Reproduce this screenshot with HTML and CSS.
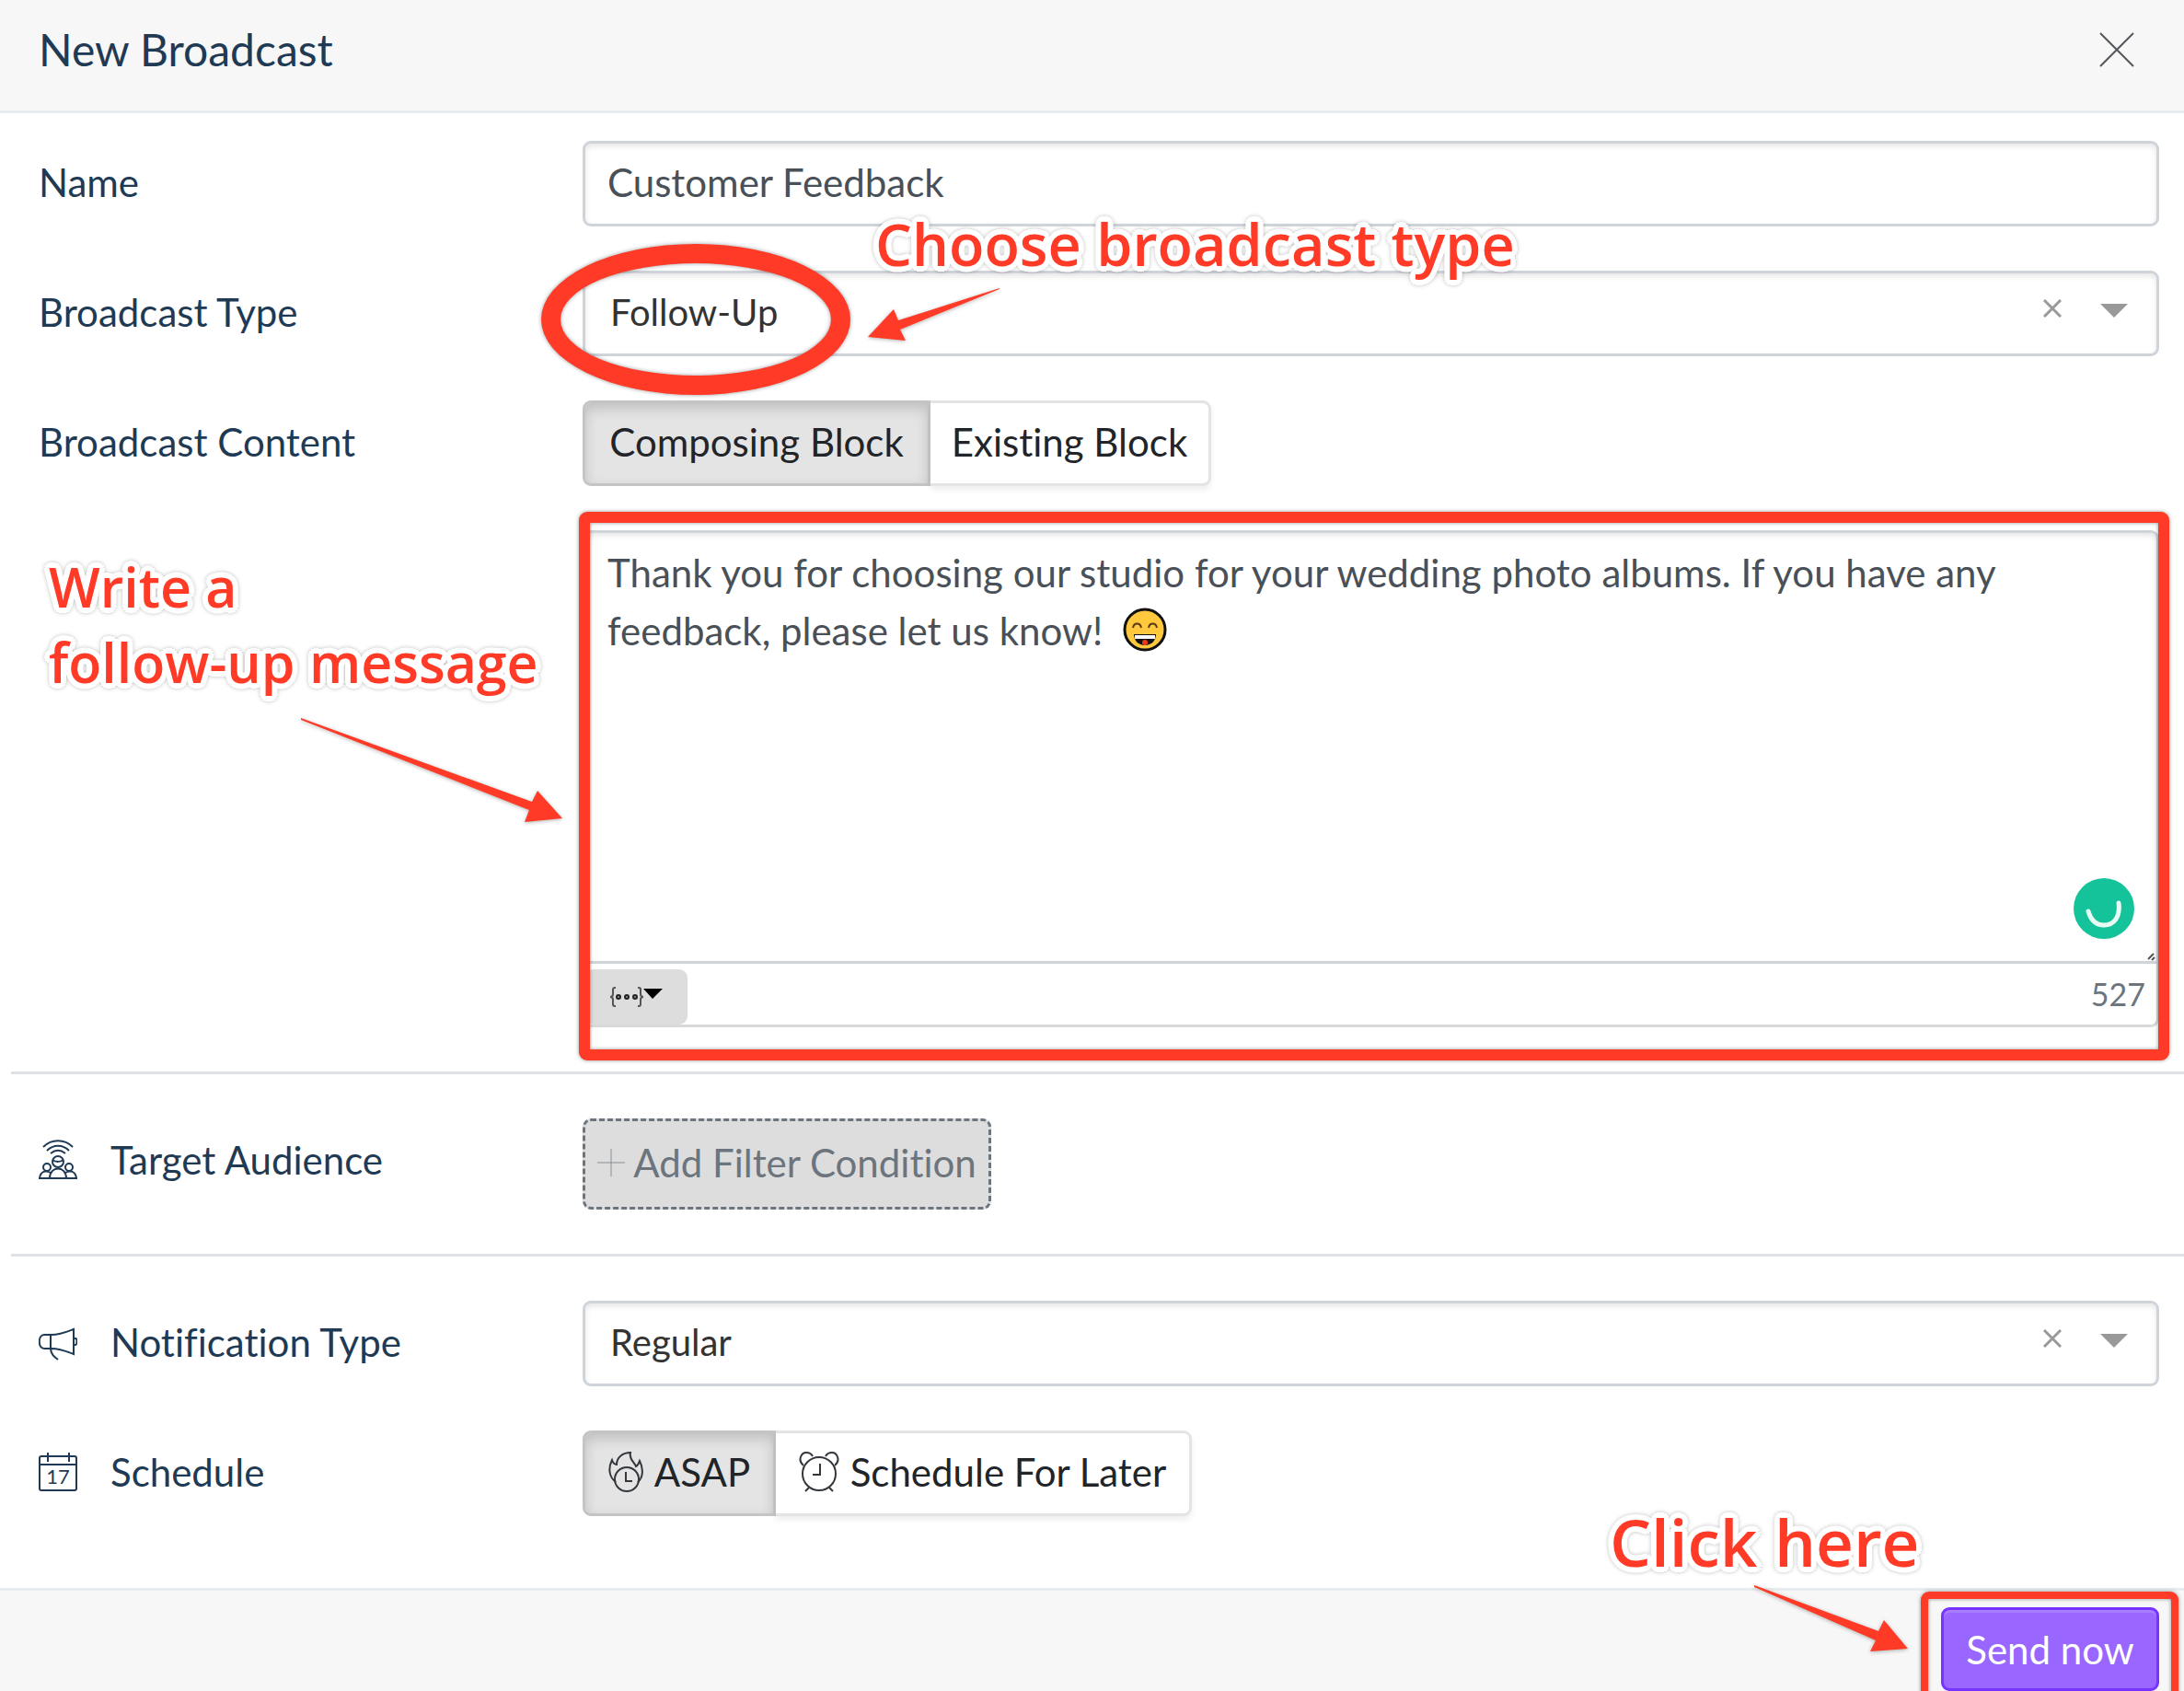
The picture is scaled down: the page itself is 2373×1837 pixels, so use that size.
FILE: index.html
```html
<!DOCTYPE html>
<html lang="en">
<head>
<meta charset="utf-8">
<title>New Broadcast</title>
<link rel="stylesheet" href="styles.css">
</head>
<body>
<form class="dialog">
  <header class="dialog-header">
    <h1 class="dialog-title">New Broadcast</h1>
    <button class="close" type="button" aria-label="Close">
      <svg width="38" height="38" viewBox="0 0 38 38"><path d="M1 1l36 36M37 1L1 37" fill="none" stroke="#55595e" stroke-width="2"/></svg>
    </button>
  </header>

  <section class="group group-first">
    <div class="row">
      <label class="label" for="name">Name</label>
      <input class="control" id="name" type="text" value="Customer Feedback">
    </div>

    <div class="row">
      <label class="label" for="type">Broadcast Type</label>
      <div class="field">
        <select class="control select" id="type"><option>Follow-Up</option></select>
        <button class="clear" type="button" aria-label="Clear broadcast type"><svg width="20" height="20" viewBox="0 0 20 20"><path d="M1 1l18 18M19 1L1 19" fill="none" stroke="#999" stroke-width="3"/></svg></button>
        <svg class="caret" width="30" height="15" viewBox="0 0 30 15"><path d="M0 0h30L15 15z" fill="#999"/></svg>
        <span class="ring"></span>
        <p class="note note-type">Choose broadcast type</p>
        <svg class="arrow arrow-type" width="146" height="60" viewBox="0 0 146 60"><path d="M144 1L34 36 29 24 1 54l41 4-6-12L144 2z"/></svg>
      </div>
    </div>

    <div class="row">
      <span class="label">Broadcast Content</span>
      <div class="toggle">
        <button class="option option-on option-composing" type="button">Composing Block</button>
        <button class="option option-existing" type="button">Existing Block</button>
      </div>
    </div>

    <div class="row row-message">
      <div class="aside">
        <p class="note note-message">Write a<br>follow-up message</p>
        <svg class="arrow arrow-message" width="286" height="116" viewBox="0 0 286 116"><path d="M1 1L252 92l6-12 27 30-41 4 5-13L1 3z"/></svg>
      </div>
      <div class="message">
        <textarea class="control message-text" aria-label="Message">Thank you for choosing our studio for your wedding photo albums. If you have any feedback, please let us know!</textarea>
        <svg class="emoji" width="48" height="48" viewBox="0 0 48 48">
          <circle cx="24" cy="24" r="22" fill="#ffc83d" stroke="#111" stroke-width="3"/>
          <path d="M11 22c1-6 8-6 9 0M28 22c1-6 8-6 9 0" fill="none" stroke="#5a3b12" stroke-width="2"/>
          <path d="M12 29h24c0 7-5 12-12 12s-12-5-12-12z" fill="#111"/>
          <path d="M13 30h22v4H13z" fill="#fff"/>
          <circle cx="24" cy="38" r="3" fill="#f03a17"/>
        </svg>
        <svg class="checker" width="68" height="68" viewBox="0 0 68 68"><circle cx="34" cy="34" r="33" fill="#15c39a"/><path d="M17 37c3 10 9 15 17 15 11 0 18-9 16-24" fill="none" stroke="#e8fbf5" stroke-width="5" stroke-linecap="round"/></svg>
        <svg class="grip" width="9" height="9" viewBox="0 0 9 9"><path d="M1 7l6-6M5 8l3-3" fill="none" stroke="#555" stroke-width="2"/></svg>
        <div class="message-bar">
          <button class="insert" type="button" aria-label="Insert variable">
            <svg width="58" height="22" viewBox="0 0 58 22">
              <path d="M7 1H6Q4 1 4 3v5q0 3-3 3 3 0 3 3v5q0 2 2 2h1M31 1h1q2 0 2 2v5q0 3 3 3-3 0-3 3v5q0 2-2 2h-1" fill="none" stroke="#555" stroke-width="2"/>
              <g fill="#999" stroke="#222" stroke-width="2"><circle cx="10" cy="11" r="2"/><circle cx="19" cy="11" r="2"/><circle cx="28" cy="11" r="2"/></g>
              <path d="M37 2h21L47 13z"/>
            </svg>
          </button>
          <span class="count">527</span>
        </div>
        <span class="frame"></span>
      </div>
    </div>
  </section>

  <section class="group">
    <div class="row">
      <span class="label">
        <svg class="icon" width="42" height="44" viewBox="0 0 42 44">
          <path d="M5 8c9-9 23-9 32 0M9 12c7-7 17-7 24 0M13 15c5-4 11-4 16 0"/>
          <circle cx="21" cy="24" r="6"/><path d="M15 22c4 3 9 2 12 0"/>
          <circle cx="9" cy="30" r="4"/><circle cx="33" cy="30" r="4"/>
          <path d="M1 42c1-8 7-9 12-6M41 42c-1-8-7-9-12-6M12 42c0-14 18-14 18 0M0 42h42"/>
        </svg>
        Target Audience
      </span>
      <button class="add-filter" type="button">
        <svg width="30" height="30" viewBox="0 0 30 30"><path d="M0 15h30M15 0v30" fill="none" stroke="#8a9096" stroke-width="1"/></svg>
        Add Filter Condition
      </button>
    </div>
  </section>

  <section class="group group-last">
    <div class="row">
      <label class="label" for="notification">
        <svg class="icon" width="42" height="44" viewBox="0 0 42 44">
          <path d="M6 14h8c9 0 16-3 24-6v27c-8-3-15-6-24-6H6c-7 0-7-15 0-15zM13 14v15c0 6 4 9 8 12M38 18h2c2 0 2 7 0 7h-2"/>
        </svg>
        Notification Type
      </label>
      <div class="field">
        <select class="control select" id="notification"><option>Regular</option></select>
        <button class="clear" type="button" aria-label="Clear notification type"><svg width="20" height="20" viewBox="0 0 20 20"><path d="M1 1l18 18M19 1L1 19" fill="none" stroke="#999" stroke-width="3"/></svg></button>
        <svg class="caret" width="30" height="15" viewBox="0 0 30 15"><path d="M0 0h30L15 15z" fill="#999"/></svg>
      </div>
    </div>

    <div class="row">
      <span class="label">
        <svg class="icon" width="42" height="44" viewBox="0 0 42 44">
          <path d="M3 5h36q2 0 2 2v33q0 2-2 2H3q-2 0-2-2V7q0-2 2-2zM1 14h40M10 1v10M33 1v10"/>
          <text class="icon-day" x="21" y="35" text-anchor="middle">17</text>
        </svg>
        Schedule
      </span>
      <div class="toggle">
        <button class="option option-on option-asap" type="button">
          <svg class="option-icon" width="38" height="44" viewBox="0 0 38 44">
            <circle cx="20" cy="30" r="13"/><path d="M19 22v10h7"/>
            <path d="M8 33C0 27 0 17 4 9c1 3 3 5 5 5 0-8 7-13 15-13-2 7 4 10 6 15 2-1 3-3 4-6 5 10 3 19-2 23"/>
          </svg>
          ASAP
        </button>
        <button class="option option-later" type="button">
          <svg class="option-icon" width="44" height="44" viewBox="0 0 44 44">
            <circle cx="22" cy="24" r="18"/><path d="M23 13v12h-8M11 39l-4 4M33 39l4 4M5 15C-2 9 3 1 8 1c4 0 6 2 7 4M39 15c7-6 2-14-3-14-4 0-6 2-7 4"/>
          </svg>
          Schedule For Later
        </button>
      </div>
    </div>
  </section>

  <footer class="dialog-footer">
    <div class="send-area">
      <p class="note note-send">Click here</p>
      <svg class="arrow arrow-send" width="170" height="74" viewBox="0 0 170 74"><path d="M1 1l135 50 6-12 26 31-41 3 6-12L1 3z"/></svg>
      <span class="frame-send"></span>
      <button class="send" type="submit">Send now</button>
    </div>
  </footer>
</form>
</body>
</html>
```
FILE: styles.css
```css
:root {
  --red: #ff3b28;
  --navy: #1f3a54;
  --line: #ced4da;
}

* { box-sizing: border-box; }

body {
  margin: 0;
  background: #fff;
  color: #212529;
  font: 42px/60px Lato, "Open Sans", sans-serif;
  font-variant-ligatures: none;
}

button, input, select, textarea {
  margin: 0;
  color: inherit;
  font: inherit;
  font-variant-ligatures: none;
}
button { padding: 0; border: 0; background: none; cursor: pointer; }
svg { display: block; flex: none; }

.dialog {
  min-height: 100vh;
  overflow: hidden;
  display: flex;
  flex-direction: column;
}

.dialog-header {
  display: flex;
  align-items: center;
  justify-content: space-between;
  padding: 24px 54px 36px 42px;
  background: #f7f7f7;
  border-bottom: 3px solid #e9ecef;
}

.dialog-title {
  margin: 0;
  color: var(--navy);
  font-size: 48px;
  font-weight: 400;
  line-height: 60px;
}

.group {
  display: flex;
  flex-direction: column;
  gap: 48px;
  margin-left: 12px;
  padding: 48px 27px 48px 30px;
  border-top: 3px solid #dee2e6;
}
.group-first { border-top: 0; padding-top: 30px; }
.group-last { padding-bottom: 78px; }

.row {
  display: grid;
  grid-template-columns: 591px minmax(0, 1fr);
  align-items: start;
}
.row-message { align-items: stretch; }

.label {
  display: flex;
  align-items: center;
  gap: 36px;
  height: 93px;
  padding-bottom: 3px;
  color: var(--navy);
}

.icon { fill: none; stroke: var(--navy); stroke-width: 2; }
.icon-day { fill: var(--navy); stroke: none; font-size: 22px; }

.field { position: relative; }

.control {
  display: block;
  width: 100%;
  height: 93px;
  padding: 0 24px 3px;
  border: 3px solid var(--line);
  border-radius: 9px;
  background: #fff;
  color: #495057;
  box-shadow: inset 0 3px 6px rgba(0, 0, 0, .1);
  outline: 0;
}
.select { appearance: none; padding: 0 27px 3px; color: #333; font-size: 40px; }

.clear { position: absolute; top: 31px; right: 106px; }
.caret { position: absolute; top: 36px; right: 34px; }

.toggle { display: flex; }
.option {
  display: flex;
  align-items: center;
  justify-content: center;
  height: 93px;
  padding-bottom: 3px;
  border: 3px solid #e4e4e4;
  border-left: 0;
  border-radius: 0 9px 9px 0;
  background: #fff;
  box-shadow: 0 4px 6px rgba(0, 0, 0, .07);
  white-space: nowrap;
}
.option-on {
  border: 3px solid #c4c4c4;
  border-radius: 9px 0 0 9px;
  background: #e4e4e4;
  box-shadow: inset 0 6px 14px rgba(0, 0, 0, .16);
}
.option-composing { width: 378px; }
.option-existing { width: 305px; }
.option-asap { width: 210px; gap: 12px; }
.option-later { width: 452px; gap: 12px; }
.option-icon { fill: none; stroke: #33373b; stroke-width: 2; }

.aside, .message, .send-area { position: relative; }
.message-text {
  height: 471px;
  padding: 12px 24px;
  line-height: 63px;
  border-radius: 9px 9px 0 0;
  resize: none;
}
.emoji { position: absolute; top: 84px; left: 587px; }
.checker { position: absolute; top: 377px; right: 26px; }
.grip { position: absolute; top: 459px; right: 4px; }

.message-bar {
  display: flex;
  align-items: flex-end;
  justify-content: space-between;
  height: 69px;
  border: 3px solid #d9d9d9;
  border-top: 0;
  border-radius: 0 0 9px 9px;
}
.insert {
  display: flex;
  align-items: center;
  width: 111px;
  height: 60px;
  padding-left: 26px;
  border-radius: 9px;
  background: #ddd;
}
.count {
  padding: 0 12px 3px 0;
  color: #6c757d;
  font-size: 34px;
}

.add-filter {
  display: flex;
  align-items: center;
  justify-content: center;
  gap: 9px;
  justify-self: start;
  width: 444px;
  height: 99px;
  padding-bottom: 3px;
  border: 3px dashed #6c757d;
  border-radius: 9px;
  background: #ddd;
  color: #6c757d;
  white-space: nowrap;
}

.dialog-footer {
  display: flex;
  flex: 1;
  align-items: flex-start;
  justify-content: flex-end;
  padding: 18px 27px 0;
  background: #f7f7f7;
  border-top: 3px solid #e9ecef;
}
.send {
  width: 237px;
  height: 91px;
  border: 3px solid #7733ff;
  border-radius: 9px;
  background: #9966ff;
  box-shadow: inset 0 3px 0 #a87dff;
  color: #fff;
}

/* Tutorial marks laid over the form */
.note {
  position: absolute;
  z-index: 2;
  margin: 0;
  color: var(--red);
  font-family: "Open Sans", "Noto Sans", sans-serif;
  font-weight: 600;
  white-space: nowrap;
  text-shadow:
    6px 0 #fff, -6px 0 #fff, 0 6px #fff, 0 -6px #fff,
    5px 3px #fff, -5px 3px #fff, 5px -3px #fff, -5px -3px #fff,
    3px 5px #fff, -3px 5px #fff, 3px -5px #fff, -3px -5px #fff,
    3px 0 #fff, -3px 0 #fff, 0 3px #fff, 0 -3px #fff;
  filter: drop-shadow(0 0 2px rgba(0, 0, 0, .25));
}
.note-type { top: -74px; left: 318px; font-size: 63px; line-height: 90px; }
.note-message { top: 20px; left: 11px; font-size: 59px; line-height: 82px; }
.note-send { top: -116px; left: -360px; font-size: 71px; line-height: 90px; }

.arrow {
  position: absolute;
  z-index: 2;
  overflow: visible;
  fill: var(--red);
  filter: drop-shadow(0 1px 2px rgba(0, 0, 0, .3));
}
.arrow-type { top: 18px; left: 309px; }
.arrow-message { top: 203px; left: 284px; }
.arrow-send { top: -25px; left: -204px; }

.ring, .frame, .frame-send {
  position: absolute;
  pointer-events: none;
  border: 12px solid var(--red);
  border-radius: 9px;
  filter: drop-shadow(0 0 2px rgba(0, 0, 0, .4));
}
.ring {
  top: -29px;
  left: -45px;
  width: 336px;
  height: 164px;
  border-width: 21px;
  border-radius: 50%;
}
.frame { inset: -20px -11px -36px -4px; }
.frame-send { inset: -17px -21px -17px -22px; border-width: 8px; }
```
